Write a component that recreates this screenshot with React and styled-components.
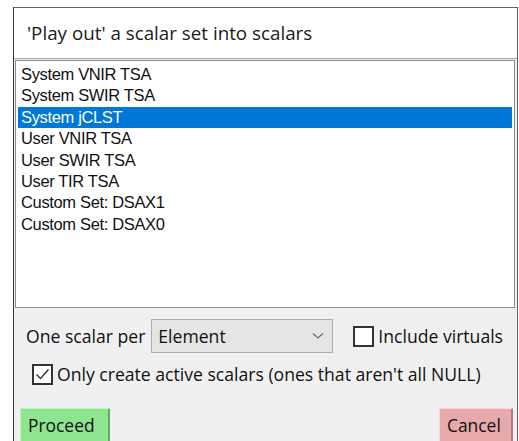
import React from 'react';
import styled, { createGlobalStyle } from 'styled-components';

const GlobalStyle = createGlobalStyle`
  html, body {
    margin: 0;
    padding: 0;
    background: #ffffff;
    overflow: hidden;
  }
  body {
    font-family: "Liberation Sans", Arial, sans-serif;
  }
`;

const Screen = styled.div`
  width: 519px;
  height: 441px;
  padding: 7px 1px 0 13px;
  box-sizing: border-box;
  overflow: hidden;
`;

const Dialog = styled.div`
  display: flex;
  flex-direction: column;
  height: 460px;
  border: 1px solid #5b6470;
  border-left-color: #2c3a48;
  background: #f0f0f0;
`;

const Header = styled.div`
  height: 50px;
  display: flex;
  align-items: center;
  padding-left: 13px;
  background: #ffffff;
  border-bottom: 1px solid #a6a6a6;
  font-family: "Open Sans", "Noto Sans", sans-serif;
  font-size: 18.8px;
  color: #1a1a1a;
`;

const ListBox = styled.ul`
  list-style: none;
  margin: 1px 2px 0 1px;
  padding: 3px 2px 0 2px;
  height: 248px;
  box-sizing: border-box;
  border: 1px solid #8c8c8c;
  background: #ffffff;
`;

const Item = styled.li`
  height: 21.4px;
  line-height: 21.4px;
  padding-left: 3px;
  font-family: "Liberation Sans", Arial, sans-serif;
  font-size: 16.5px;
  letter-spacing: -0.35px;
  white-space: nowrap;
  color: ${p => (p.$selected ? '#ffffff' : '#111111')};
  background: ${p => (p.$selected ? '#0078d7' : 'transparent')};
`;

const Controls = styled.div`
  display: flex;
  flex-direction: column;
  font-family: "Open Sans", "Noto Sans", sans-serif;
  font-size: 17.6px;
  color: #111111;
`;

const Row = styled.div`
  display: flex;
  align-items: center;
`;

const PerRow = styled(Row)`
  margin-top: 11px;
  padding-left: 12px;
`;

const Combo = styled.div`
  width: 182px;
  height: 34px;
  box-sizing: border-box;
  margin-left: 6px;
  padding: 0 8px 0 6px;
  display: flex;
  align-items: center;
  justify-content: space-between;
  background: #e5e5e5;
  border: 1px solid #acacac;
`;

const Check = styled.span`
  width: 21px;
  height: 21px;
  box-sizing: border-box;
  border: 2px solid #333333;
  background: #ffffff;
  display: inline-flex;
  align-items: center;
  justify-content: center;
  flex: none;
`;

const CheckLabel = styled.label`
  display: flex;
  align-items: center;
  gap: 4px;
  margin-left: ${p => p.$indent}px;
  white-space: nowrap;
`;

const ActiveRow = styled(Row)`
  margin-top: 9px;
  padding-left: 18px;
`;

const Buttons = styled(Row)`
  margin-top: 22px;
  padding: 0 4px 0 6px;
  justify-content: space-between;
  align-items: flex-start;
`;

const Button = styled.button`
  height: 36px;
  padding: 0 6px 3px 7px;
  font-family: "Open Sans", "Noto Sans", sans-serif;
  font-size: 17.4px;
  color: #111111;
  background: ${p => p.$bg};
  border: 1px solid ${p => p.$edge};
  border-top-color: ${p => p.$light};
  border-left-color: ${p => p.$light};
  box-shadow: inset -1px -1px 0 ${p => p.$edge};
  width: ${p => p.$w}px;
  text-align: left;
`;

const Chevron = () => (
  <svg width="12" height="8" viewBox="0 0 12 8">
    <path d="M1 1.5 L6 6 L11 1.5" fill="none" stroke="#6a6a6a" strokeWidth="1.2" />
  </svg>
);

const Tick = () => (
  <svg width="15" height="13" viewBox="0 0 15 13">
    <path d="M1.5 6.5 L5.5 10.5 L13.5 1.5" fill="none" stroke="#333333" strokeWidth="1.4" />
  </svg>
);

const sets = [
  'System VNIR TSA',
  'System SWIR TSA',
  'System jCLST',
  'User VNIR TSA',
  'User SWIR TSA',
  'User TIR TSA',
  'Custom Set: DSAX1',
  'Custom Set: DSAX0'
];

export default function App() {
  const selected = 'System jCLST';
  return (
    <Screen>
      <GlobalStyle />
      <Dialog>
        <Header>'Play out' a scalar set into scalars</Header>
        <ListBox>
          {sets.map(name => (
            <Item key={name} $selected={name === selected}>
              {name}
            </Item>
          ))}
        </ListBox>
        <Controls>
          <PerRow>
            <span>One scalar per</span>
            <Combo>
              <span>Element</span>
              <Chevron />
            </Combo>
            <CheckLabel $indent={20}>
              <Check />
              <span>Include virtuals</span>
            </CheckLabel>
          </PerRow>
          <ActiveRow>
            <CheckLabel $indent={0}>
              <Check>
                <Tick />
              </Check>
              <span>Only create active scalars (ones that aren't all NULL)</span>
            </CheckLabel>
          </ActiveRow>
          <Buttons>
            <Button $bg="#8fe48f" $edge="#5fae5f" $light="#c4f2c4" $w={90}>
              Proceed
            </Button>
            <Button $bg="#e7a9a9" $edge="#b07a7a" $light="#f6d6d6" $w={74}>
              Cancel
            </Button>
          </Buttons>
        </Controls>
      </Dialog>
    </Screen>
  );
}
